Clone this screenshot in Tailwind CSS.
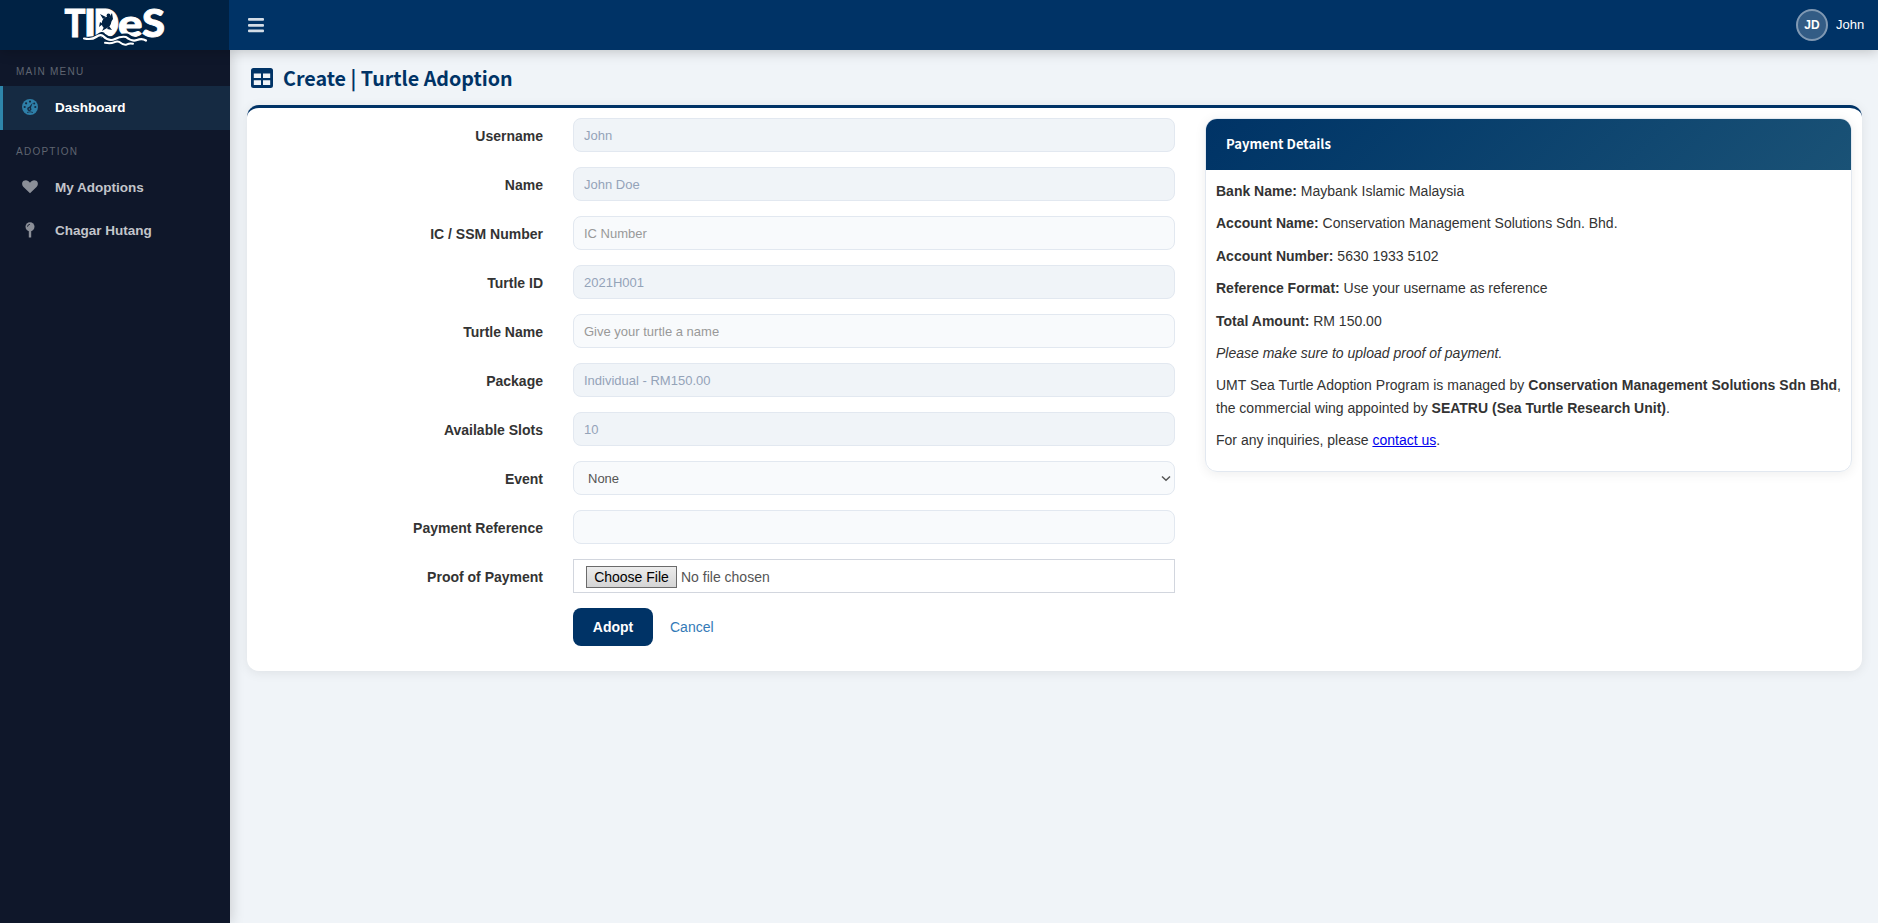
<!DOCTYPE html>
<html lang="en">
<head>
<meta charset="utf-8">
<title>Create | Turtle Adoption</title>
<script src="https://cdn.jsdelivr.net/npm/@tailwindcss/browser@4"></script>
</head>
<body class="flex h-screen flex-col overflow-hidden bg-[#f0f4f8] font-['Liberation_Sans',sans-serif] text-sm text-[#333]">
<header class="relative z-20 flex h-[50px] shrink-0 bg-[#003366] shadow-[0_2px_12px_rgba(0,0,0,0.2)]">
  <div class="w-[229px] bg-[#002244]">
    <svg class="h-[50px] w-[229px]" viewBox="0 0 229 50" fill="#fff">
      <g font-family="Lato, sans-serif" font-weight="900" font-size="38" stroke="#fff" stroke-width=".9">
        <text x="64.500" y="36.800" textLength="21" lengthAdjust="spacingAndGlyphs">T</text>
        <text x="84" y="36.800" textLength="12" lengthAdjust="spacingAndGlyphs">I</text>
        <text x="93.500" y="36.800" textLength="25.500" lengthAdjust="spacingAndGlyphs">D</text>
        <text x="118" y="36.800" textLength="24.500" lengthAdjust="spacingAndGlyphs">e</text>
        <text x="142" y="36.800" textLength="23" lengthAdjust="spacingAndGlyphs">S</text>
      </g>
      <path d="M99 13h6q9 2 9 10 0 7-6 10h-9z"/>
      <g fill="#002244">
        <ellipse cx="106.500" cy="22.500" rx="4.600" ry="6" transform="rotate(20 106.500 22.500)"/>
        <path d="M103 19l-3-5 6 3zM109 18l3-5 1 6-2 3zM103 24l-4 3 1-5zM109 26l3 4-5-1zM104 27l-2 4 5-3z"/>
        <circle cx="108.500" cy="15.500" r="1.900"/>
      </g>
      <g fill="none" stroke-linecap="round" stroke-linejoin="round">
        <path stroke="#002244" stroke-width="5" d="M85 39q8 1 13-2.500t5-1q6 5 12 2.500t12-2q6 5 11 3.500t8 .5"/>
        <path stroke="#fff" stroke-width="2.200" d="M84 38.500q8 1.500 12-1.500t7-1q6 6 12 3t11-2q6 5 11 3t9 .500"/>
        <path stroke="#fff" stroke-width="2" d="M105 42.800q6 1 9-.5t5-.5q5 4 8 2.500t6-.5"/>
      </g>
    </svg>
  </div>
  <div class="flex flex-1 items-center justify-between pl-[19px] pr-[14px]">
    <svg class="h-4 w-4" viewBox="0 0 16 16" fill="#d4dde6"><rect y="1" width="16" height="2.700" rx="1"/><rect y="7" width="16" height="2.700" rx="1"/><rect y="12.500" width="16" height="2.700" rx="1"/></svg>
    <div class="flex items-center gap-2 text-[13px] text-white">
      <span class="flex h-8 w-8 items-center justify-center rounded-full border-2 border-[#8099b3] bg-[#335c85] text-xs font-bold">JD</span>
      <span class="w-7 font-medium">John</span>
    </div>
  </div>
</header>
<div class="flex min-h-0 flex-1">
  <aside class="relative z-10 w-[230px] shrink-0 bg-[#0f172a] shadow-[2px_0_12px_rgba(0,0,0,0.15)]">
    <div class="flex h-9 items-center pl-4 pt-[9px] text-[10px] tracking-[1.250px] text-[#5f6571]">MAIN MENU</div>
    <nav>
      <a class="flex h-11 items-center border-l-[3px] border-[#2e86ab] bg-[#152a42] pl-[19px] text-[13.500px] font-bold text-white">
        <svg class="relative -top-px mr-[17px] h-4 w-4" viewBox="0 0 16 16"><circle cx="8" cy="8" r="8" fill="#2e7fa8"/><g fill="#152a42"><circle cx="8" cy="2.600" r="1.100"/><circle cx="4.100" cy="4.300" r="1.100"/><circle cx="2.700" cy="8" r="1.100"/><circle cx="13.300" cy="8" r="1.100"/><circle cx="12.200" cy="4.600" r="1"/></g><path d="M10.700 3.800 8.900 8.800a2 2 0 1 1-1.800-.8z" fill="#152a42"/><circle cx="7.400" cy="10" r=".8" fill="#2e7fa8"/><path d="M5 13.500q3-1.500 6 0" stroke="#152a42" fill="none" stroke-width=".8"/></svg>Dashboard</a>
    </nav>
    <div class="flex h-[35px] items-center pl-4 pt-[10px] text-[10px] tracking-[1.250px] text-[#5f6571]">ADOPTION</div>
    <nav class="pt-px text-[13.500px] font-bold text-[#c3c5ca]">
      <a class="flex h-[43px] items-center pl-[22px]">
        <svg class="relative -top-px mr-[17px] h-4 w-4" viewBox="0 0 16 16" fill="#8b8f98"><path d="M8 14.300 1.500 8C-.5 5.900-.2 3 1.700 1.800 3.800.5 6.500 1.300 8 3.700 9.500 1.300 12.200.5 14.300 1.800 16.200 3 16.500 5.900 14.500 8z"/></svg>My Adoptions</a>
      <a class="flex h-[43px] items-center pl-[22px]">
        <svg class="relative -top-px mr-[17px] h-4 w-4" viewBox="0 0 16 16" fill="#8b8f98"><circle cx="8" cy="4.800" r="4.500"/><path d="M6.800 9h2.400v6.500H6.800z"/><path d="M5.500 4.700Q5.700 2.500 7.900 2.300" stroke="#0f172a" stroke-width=".9" fill="none"/></svg>Chagar Hutang</a>
    </nav>
  </aside>
  <main class="flex-1 pl-[17px] pr-4">
    <h1 class="flex h-[55px] items-center pl-1 font-['Noto_Sans_CJK_JP',sans-serif] text-[19.700px] font-bold text-[#003366]">
      <svg class="mr-[10px] h-[20px] w-[22px]" viewBox="0 0 22 20" fill="#003366" fill-rule="evenodd"><path d="M2.500 0h17A2.500 2.500 0 0 1 22 2.500v15a2.500 2.500 0 0 1-2.500 2.500h-17A2.500 2.500 0 0 1 0 17.500v-15A2.500 2.500 0 0 1 2.500 0zM2.800 5.500V10H10V5.500zM12 5.500V10h7.200V5.500zM2.800 12.300v4.700H10v-4.700zM12 12.300v4.700h7.200v-4.700z"/></svg>
      <span class="pt-0.5">Create | Turtle Adoption</span>
    </h1>
    <section class="flex h-[566px] rounded-[12px] border-t-[3px] border-[#003366] bg-white pl-[15px] pr-[10px] pt-[10px] shadow-[0_2px_12px_rgba(0,0,0,0.08)]">
      <form class="grid w-[913px] grid-cols-[281px_602px] auto-rows-[34px] gap-x-[30px] gap-y-[15px] text-[13px]">
        <label class="pt-2 text-right text-sm/[20px] font-bold">Username</label>
        <input class="rounded-[8px] border border-[#e2e8f0] bg-[#f0f4f8] px-[10px] pt-0.5 text-[#94a3b8]" value="John" readonly>
        <label class="pt-2 text-right text-sm/[20px] font-bold">Name</label>
        <input class="rounded-[8px] border border-[#e2e8f0] bg-[#f0f4f8] px-[10px] pt-0.5 text-[#94a3b8]" value="John Doe" readonly>
        <label class="pt-2 text-right text-sm/[20px] font-bold">IC / SSM Number</label>
        <input class="rounded-[8px] border border-[#e2e8f0] bg-[#f8fafc] px-[10px] pt-0.5 placeholder:text-[#999]" placeholder="IC Number">
        <label class="pt-2 text-right text-sm/[20px] font-bold">Turtle ID</label>
        <input class="rounded-[8px] border border-[#e2e8f0] bg-[#f0f4f8] px-[10px] pt-0.5 text-[#94a3b8]" value="2021H001" readonly>
        <label class="pt-2 text-right text-sm/[20px] font-bold">Turtle Name</label>
        <input class="rounded-[8px] border border-[#e2e8f0] bg-[#f8fafc] px-[10px] pt-0.5 placeholder:text-[#999]" placeholder="Give your turtle a name">
        <label class="pt-2 text-right text-sm/[20px] font-bold">Package</label>
        <input class="rounded-[8px] border border-[#e2e8f0] bg-[#f0f4f8] px-[10px] pt-0.5 text-[#94a3b8]" value="Individual - RM150.00" readonly>
        <label class="pt-2 text-right text-sm/[20px] font-bold">Available Slots</label>
        <input class="rounded-[8px] border border-[#e2e8f0] bg-[#f0f4f8] px-[10px] pt-0.5 text-[#94a3b8]" value="10" readonly>
        <label class="pt-2 text-right text-sm/[20px] font-bold">Event</label>
        <div class="flex items-center justify-between rounded-[8px] border border-[#e2e8f0] bg-[#f8fafc] pl-[14px] pr-[3px] pt-0.5 text-[#555]"><span>None</span><svg class="h-[10px] w-[10px]" viewBox="0 0 10 10" fill="none" stroke="#555" stroke-width="1.500"><path d="M1 2.500l4 3.700 4-3.700"/></svg></div>
        <label class="pt-2 text-right text-sm/[20px] font-bold">Payment Reference</label>
        <input class="rounded-[8px] border border-[#e2e8f0] bg-[#f8fafc] px-[10px]">
        <label class="pt-2 text-right text-sm/[20px] font-bold">Proof of Payment</label>
        <div class="flex items-center border border-[#d2d6de] pl-3 pt-0.5 text-sm text-[#555]"><span class="flex h-[22px] w-[91px] items-center justify-center border border-[#6b6b6b] bg-linear-to-b from-[#ececec] to-[#d5d5d5] text-black">Choose File</span><span class="ml-1">No file chosen</span></div>
        <div class="col-start-2 flex h-[38px] items-center text-sm"><button type="button" class="h-[38px] w-20 rounded-[8px] bg-[#003366] font-bold text-white">Adopt</button><a class="ml-[17px] text-[#337ab7]">Cancel</a></div>
      </form>
      <div class="ml-[30px] flex h-[354px] flex-1 flex-col overflow-hidden rounded-[12px] border border-[#e2e8f0] shadow-[0_2px_12px_rgba(0,0,0,0.07)]">
        <h2 class="flex h-[51px] shrink-0 items-center bg-linear-135 from-[#003366] to-[#1a5276] pl-5 font-['Noto_Sans_CJK_JP',sans-serif] text-[13.100px] font-bold text-white">Payment Details</h2>
        <div class="flex flex-col gap-[10px] px-[10px] pt-[10px] leading-[22.400px]">
          <p><b>Bank Name:</b> Maybank Islamic Malaysia</p>
          <p><b>Account Name:</b> Conservation Management Solutions Sdn. Bhd.</p>
          <p><b>Account Number:</b> 5630 1933 5102</p>
          <p><b>Reference Format:</b> Use your username as reference</p>
          <p><b>Total Amount:</b> RM 150.00</p>
          <p><i>Please make sure to upload proof of payment.</i></p>
          <p class="text-justify"><span class="tracking-[-0.040px]">UMT Sea Turtle Adoption Program is managed by</span> <b class="whitespace-nowrap">Conservation Management Solutions Sdn Bhd</b>, the commercial wing appointed by <b>SEATRU (Sea Turtle Research Unit)</b>.</p>
          <p>For any inquiries, please <a class="text-[#0000ee] underline">contact us</a>.</p>
        </div>
      </div>
    </section>
  </main>
</div>
</body>
</html>
